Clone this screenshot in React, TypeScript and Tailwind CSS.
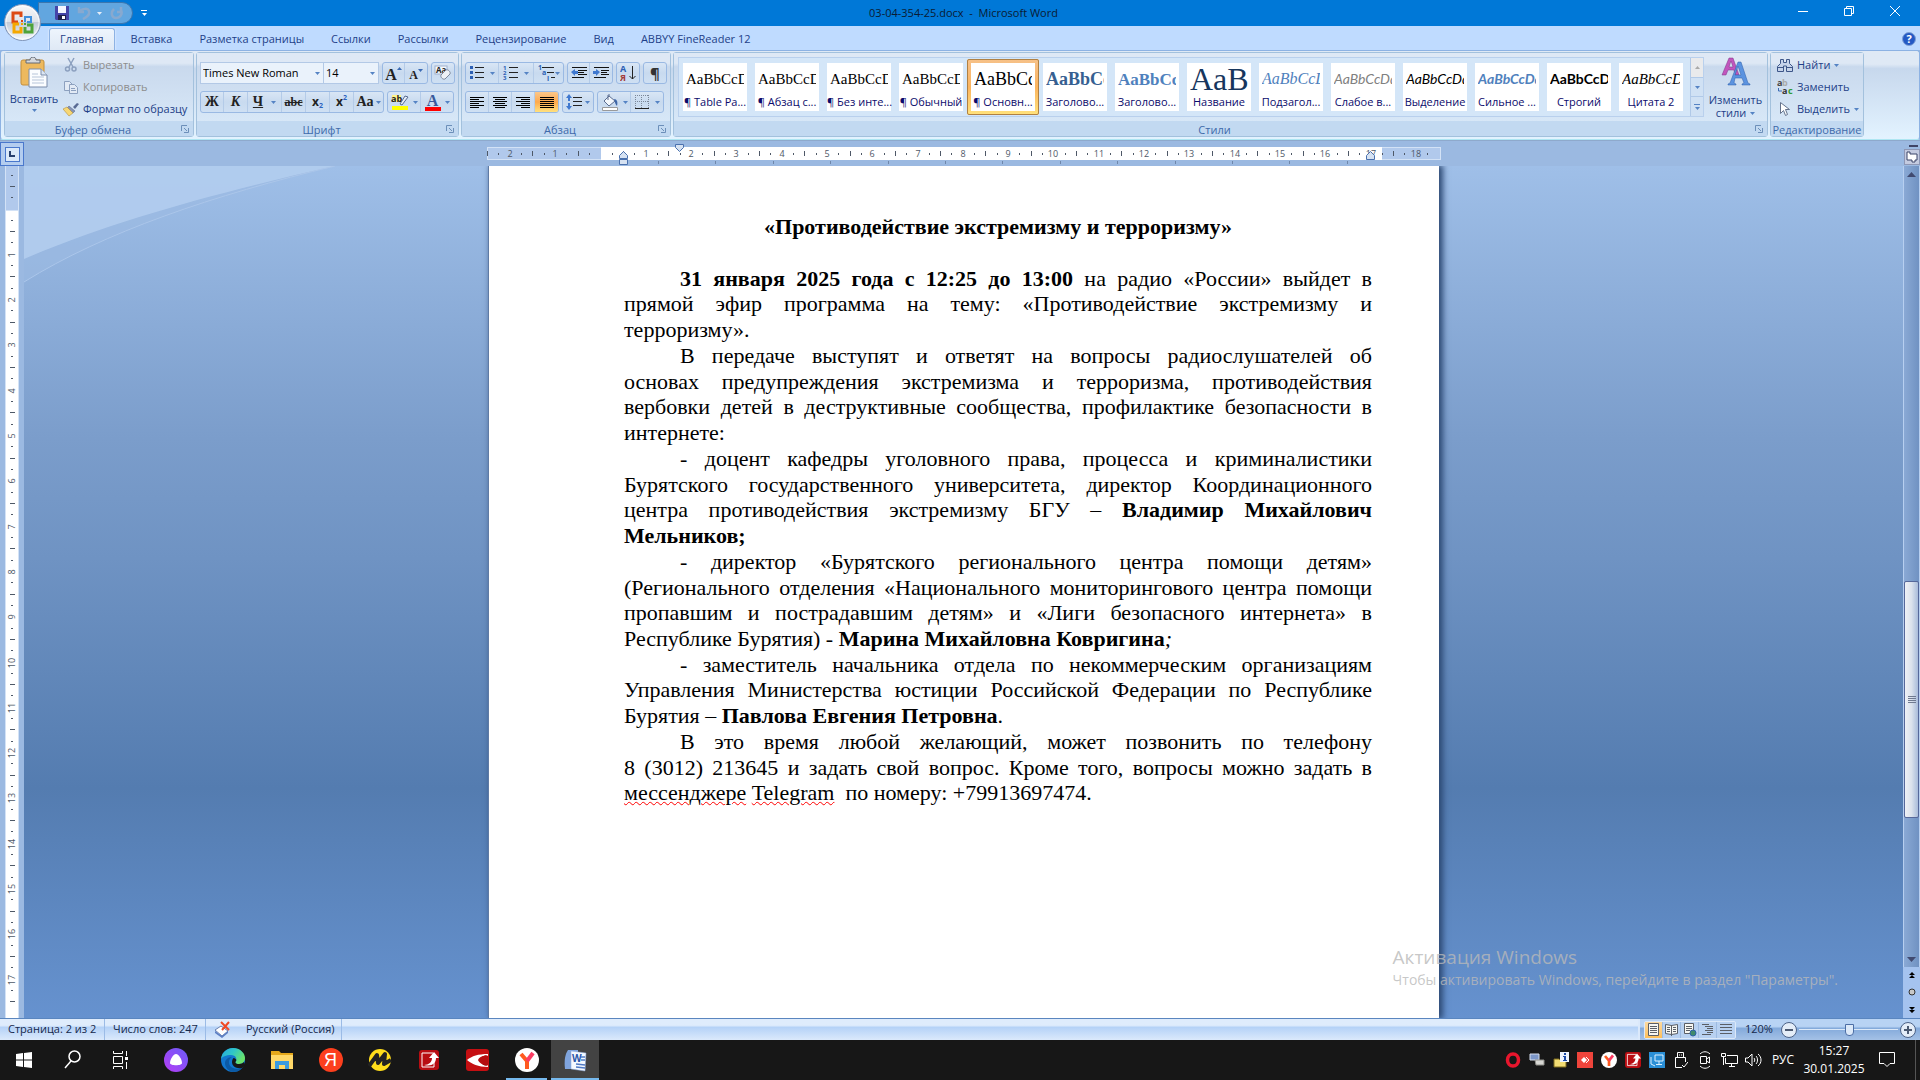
import React from 'react';

type IconProps = { className?: string };

const CELL = 'flex h-full items-center justify-center gap-1';
const GROUP =
  'flex h-[22px] divide-x divide-[#b4cbe8] overflow-hidden rounded-[3px] border border-[#9ab9e3] bg-gradient-to-b from-[#d9e6f5] via-[#c8daef] to-[#cfe0f3]';

const Arrow: React.FC<IconProps> = ({ className = 'text-[#5583c4]' }) => (
  <svg className={`shrink-0 ${className}`} width="5" height="3" viewBox="0 0 5 3" fill="currentColor" aria-hidden="true">
    <path d="M0 0h5L2.5 3z" />
  </svg>
);

/* ---------- Title bar ---------- */

const OfficeButton = () => (
  <button aria-label="Кнопка Office" className="absolute left-1 top-1 z-10">
    <svg width="38" height="38" viewBox="0 0 38 38">
      <defs>
        <linearGradient id="orb" x1="0" y1="0" x2="0" y2="1">
          <stop offset="0" stopColor="#f7f8fa" />
          <stop offset="0.48" stopColor="#dfe3ea" />
          <stop offset="0.5" stopColor="#c2cad7" />
          <stop offset="1" stopColor="#f5f9fd" />
        </linearGradient>
      </defs>
      <circle cx="18.5" cy="18.5" r="18" fill="url(#orb)" stroke="#7d93b8" />
      <circle cx="18.5" cy="18.5" r="16.5" fill="none" stroke="#fff" opacity="0.7" />
      <g fill="none" strokeWidth="3">
        <path d="M17 13V9H9v9h5" stroke="#dc4a14" />
        <path d="M17 23v5H10v-8h5" stroke="#f5a800" />
        <path d="M21 23v5h7v-7h-5" stroke="#4ea33a" />
      </g>
      <path d="M21 16v-3h6v5h-4" fill="none" stroke="#3f8fdc" strokeWidth="2" />
      <path d="M17 16h2v2h-2z" fill="#dc4a14" />
      <path d="M20 16h2v2h-2z" fill="#3f8fdc" />
      <path d="M17 19h2v2h-2z" fill="#f5a800" />
      <path d="M20 19h2v2h-2z" fill="#4ea33a" />
    </svg>
  </button>
);

const TitleBar = () => (
  <header className="relative flex h-[26px] shrink-0 items-center bg-[#0078d7]">
    <OfficeButton />
    <div className="ml-[38px] flex h-[22px] w-[95px] items-center rounded-r-full border border-[#3b76ae] bg-[#62a6df] pl-4">
      <button aria-label="Сохранить">
        <svg width="14" height="14" viewBox="0 0 14 14">
          <path d="M0 0h14v14H1L0 13z" fill="#4545a8" />
          <path d="M3 0h8v7H3z" fill="#f4f6ff" />
          <path d="M3 9h8v5H3z" fill="#20204a" />
          <path d="M7 10h3v3H7z" fill="#fff" />
        </svg>
      </button>
      <button aria-label="Отменить" className="ml-2 flex items-center gap-1.5">
        <svg width="14" height="14" viewBox="0 0 14 14" fill="none" stroke="#88a9cf" strokeWidth="2.5">
          <path d="M2 1v5h5M2 6c3-4 9-4 10-1 1 3-2 6-6 8" />
        </svg>
        <Arrow className="text-[#e6eef8]" />
      </button>
      <button aria-label="Вернуть" className="ml-2">
        <svg width="13" height="14" viewBox="0 0 13 14" fill="none" stroke="#88a9cf" strokeWidth="2.5">
          <path d="M11 1v5H7M11 4c2 4-1 8-5 8S0 7 4 3" />
        </svg>
      </button>
    </div>
    <button aria-label="Настройка панели быстрого доступа" className="ml-2 flex flex-col items-center gap-0.5 text-white">
      <span className="h-px w-1.5 bg-white" />
      <Arrow className="text-white" />
    </button>
    <h1 className="flex-1 text-center text-[11px] text-[#0a1b33]">03-04-354-25.docx&nbsp; - &nbsp;Microsoft Word</h1>
    <div className="mb-1 mr-0.5 flex text-white">
      {[
        { label: 'Свернуть', d: 'M0 5.5h10' },
        { label: 'Восстановить', d: 'M.5 2.5h7v7h-7zM2.5 2.5v-2h7v7h-2' },
        { label: 'Закрыть', d: 'M0 0l10 10M10 0L0 10' },
      ].map((b) => (
        <button key={b.label} aria-label={b.label} className="flex h-[22px] w-[46px] items-center justify-center">
          <svg width="10" height="10" viewBox="0 0 10 10" fill="none" stroke="currentColor">
            <path d={b.d} />
          </svg>
        </button>
      ))}
    </div>
  </header>
);

const TABS = ['Главная', 'Вставка', 'Разметка страницы', 'Ссылки', 'Рассылки', 'Рецензирование', 'Вид', 'ABBYY FineReader 12'];

const TabRow = () => (
  <nav className="flex h-6 shrink-0 items-end gap-[5px] bg-[#bfdbff] pl-[49px] pr-1">
    {TABS.map((tab, i) => (
      <button
        key={tab}
        className={
          i === 0
            ? 'h-[22px] rounded-t-[3px] border border-b-0 border-[#8db2e3] bg-gradient-to-b from-[#eef5fd] to-[#dfe9f5] px-2.5 shadow-[0_0_2px_#fff]'
            : 'h-[22px] border border-b-0 border-transparent px-2.5'
        }
      >
        {tab}
      </button>
    ))}
    <button aria-label="Справка" className="mb-1 ml-auto">
      <svg width="14" height="14" viewBox="0 0 14 14">
        <circle cx="7" cy="7" r="6.5" fill="#2459c4" stroke="#7f9fd4" />
        <text x="7" y="11" textAnchor="middle" fontSize="11" fontWeight="bold" fill="#fff">?</text>
      </svg>
    </button>
  </nav>
);

/* ---------- Ribbon ---------- */

const Panel: React.FC<{ title: string; launcher?: boolean; className?: string; children: React.ReactNode }> = ({
  title,
  launcher = true,
  className = '',
  children,
}) => (
  <section className={`flex h-[85px] shrink-0 flex-col rounded-[3px] border border-[#a3c1dd] ${className}`}>
    <div className="flex flex-1 bg-gradient-to-b from-[#dee8f5] from-15% via-[#c9d9ed] via-20% to-[#d7e7f7]">{children}</div>
    <div className="flex h-[15px] items-center bg-[#c2d9f1] text-[#3e6aaa]">
      <h2 className="flex-1 whitespace-nowrap pt-0.5 text-center leading-[14px]">{title}</h2>
      {launcher && (
        <button aria-label={`${title}: параметры`} className="mr-1">
          <svg width="8" height="8" viewBox="0 0 8 8" fill="none" stroke="#6c8fb9">
            <path d="M.5 6V.5H6M3 3l3 3M7.5 3v4.5H3" />
          </svg>
        </button>
      )}
    </div>
  </section>
);

const PasteIcon = () => (
  <svg width="28" height="32" viewBox="0 0 28 32">
    <rect x="1" y="3" width="23" height="25" rx="2" fill="#edb95e" stroke="#c58f3b" />
    <path d="M6 6V3h4c0-4 6-4 6 0h4v3z" fill="#d5d8dd" stroke="#646a75" />
    <path d="M9 12h12l6 6v12H9z" fill="#fbfdff" stroke="#7a8cab" />
    <path d="M21 12v6h6" fill="#dbe5f2" stroke="#7a8cab" />
    <path d="M12 17h6M12 20h12M12 23h12M12 26h12" stroke="#b7c5d9" />
  </svg>
);

const ClipboardPanel = () => (
  <Panel title="Буфер обмена" className="w-[190px]">
    <button className="flex w-[58px] flex-col items-center pt-1">
      <PasteIcon />
      <span className="mt-0.5 leading-4">Вставить</span>
      <Arrow className="mt-0.5 text-[#5583c4]" />
    </button>
    <div className="flex flex-col pt-px">
      <button disabled className="flex h-[22px] items-center gap-1 text-[#8d8d8d]">
        <svg width="16" height="16" viewBox="0 0 16 16" fill="none" stroke="#8ca0bf" strokeWidth="1.5">
          <path d="M5 1l5 9M11 1L6 10" />
          <circle cx="4.5" cy="12" r="2" />
          <circle cx="11" cy="12" r="2" />
        </svg>
        Вырезать
      </button>
      <button disabled className="flex h-[22px] items-center gap-1 text-[#8d8d8d]">
        <svg width="16" height="16" viewBox="0 0 16 16" fill="#e2eaf5" stroke="#8ca0bf">
          <path d="M1.5 2.5h5l3 3v6h-8z" />
          <path d="M6.5 5.5h5l3 3v6h-8zM8 9.5h4M8 11.5h5" />
        </svg>
        Копировать
      </button>
      <button className="flex h-[22px] items-center gap-1 whitespace-nowrap">
        <svg width="16" height="16" viewBox="0 0 16 16">
          <path d="M10 6l4-4 2 1-4 5z" fill="#596a93" />
          <path d="M6 5l6 5-2 2-6-5z" fill="#8794b4" stroke="#55658c" strokeWidth="0.5" />
          <path d="M4 6l6 6-4 3-6-7z" fill="#f7d774" stroke="#a8812d" strokeWidth="0.5" />
        </svg>
        Формат по образцу
      </button>
    </div>
  </Panel>
);

const Letter: React.FC<{ children: React.ReactNode; className?: string }> = ({ children, className = '' }) => (
  <span className={`font-['Liberation_Serif',serif] font-bold leading-none text-[#222] ${className}`}>{children}</span>
);

const FontPanel = () => (
  <Panel title="Шрифт" className="w-[263px]">
    <div className="flex flex-col gap-[7px] pl-[3px] pt-[9px]">
      <div className="flex gap-[3px]">
        <div className="flex h-[22px] text-[11px] text-black">
          <label className="relative flex w-[124px] items-center">
            <select aria-label="Шрифт" className="h-full w-full appearance-none border border-[#b3c9e6] bg-[#eaf2fb] px-0.5">
              <option>Times New Roman</option>
            </select>
            <Arrow className="pointer-events-none absolute right-1 text-[#5583c4]" />
          </label>
          <label className="relative flex w-[55px] items-center">
            <select aria-label="Размер шрифта" className="h-full w-full appearance-none border border-l-0 border-[#b3c9e6] bg-[#eaf2fb] px-0.5">
              <option>14</option>
            </select>
            <Arrow className="pointer-events-none absolute right-1 text-[#5583c4]" />
          </label>
        </div>
        <div className={GROUP}>
          <button aria-label="Увеличить размер" className="flex w-[22px] justify-center pt-1">
            <Letter className="text-base">A</Letter>
            <svg width="5" height="3" viewBox="0 0 5 3"><path d="M0 3h5L2.5 0z" fill="#3b6bb5" /></svg>
          </button>
          <button aria-label="Уменьшить размер" className="flex w-[22px] justify-center pt-1.5">
            <Letter className="text-xs">A</Letter>
            <Arrow className="text-[#3b6bb5]" />
          </button>
        </div>
        <div className={GROUP}>
          <button aria-label="Очистить формат" className={`${CELL} w-[22px]`}>
            <svg width="18" height="18" viewBox="0 0 18 18">
              <rect x="1" y="2" width="12" height="8" fill="#f4f8fd" stroke="#9fb0cc" />
              <text x="2" y="9" fontSize="8" fontWeight="bold" fill="#222">Aa</text>
              <path d="M7 11l5-5c2-1 5 2 4 4l-5 5c-2 1-5-2-4-4z" fill="#eef1f6" stroke="#7c879c" />
            </svg>
          </button>
        </div>
      </div>
      <div className="flex gap-[3px]">
        <div className={GROUP}>
          <button aria-label="Полужирный" className={`${CELL} w-[23px]`}><Letter className="text-sm">Ж</Letter></button>
          <button aria-label="Курсив" className={`${CELL} w-6`}><Letter className="text-sm italic">К</Letter></button>
          <button aria-label="Подчеркнутый" className={`${CELL} w-[34px] gap-2`}><Letter className="text-sm underline">Ч</Letter><Arrow /></button>
          <button aria-label="Зачеркнутый" className={`${CELL} w-6`}><Letter className="text-xs line-through">abc</Letter></button>
          <button aria-label="Подстрочный" className={`${CELL} w-6 !gap-0`}>
            <span className="text-xs font-bold text-[#222]">x</span><span className="mt-2 text-[7px] font-bold text-[#2c62c0]">2</span>
          </button>
          <button aria-label="Надстрочный" className={`${CELL} w-6 !gap-0`}>
            <span className="text-xs font-bold text-[#222]">x</span><span className="mb-2 text-[7px] font-bold text-[#2c62c0]">2</span>
          </button>
          <button aria-label="Регистр" className={`${CELL} w-[29px] !gap-0.5`}><Letter className="text-sm">Aa</Letter><Arrow /></button>
        </div>
        <div className={GROUP}>
          <button aria-label="Цвет выделения текста" className={`${CELL} w-[33px]`}>
            <svg width="18" height="18" viewBox="0 0 18 18">
              <path d="M1 2h9v7H1z" fill="#fff58a" />
              <text x="0" y="9" fontSize="9" fontWeight="bold" fill="#222">ab</text>
              <path d="M9 11l5-8 3 1-6 8z" fill="#e8eef8" stroke="#56698f" />
              <path d="M1 13h16v4H1z" fill="#ff0" />
            </svg>
            <Arrow />
          </button>
          <button aria-label="Цвет текста" className={`${CELL} w-8`}>
            <span className="flex flex-col items-center">
              <span className="font-['Liberation_Serif',serif] text-base font-bold leading-[13px] text-[#39599b]">A</span>
              <span className="h-1 w-4 bg-[#f00]" />
            </span>
            <Arrow />
          </button>
        </div>
      </div>
    </div>
  </Panel>
);

const ListIcon: React.FC<{ kind: 'bullet' | 'number' | 'tree' }> = ({ kind }) => (
  <svg width="17" height="16" viewBox="0 0 17 16">
    {kind === 'bullet' && (
      <>
        <path d="M6 2.5h9M6 7.5h9M6 12.5h9" stroke="#222" />
        <path d="M1 1h3v3H1zM1 6h3v3H1zM1 11h3v3H1z" fill="#2c5fb4" />
      </>
    )}
    {kind === 'number' && (
      <>
        <path d="M6 2.5h9M6 7.5h9M6 12.5h9" stroke="#222" />
        <g fontSize="6" fontWeight="bold" fill="#2c5fb4">
          <text x="0" y="5">1</text>
          <text x="0" y="10">2</text>
          <text x="0" y="15">3</text>
        </g>
      </>
    )}
    {kind === 'tree' && (
      <>
        <path d="M4 2.5h12M9 7.5h7M13 12.5h4" stroke="#222" />
        <g fontSize="7" fontWeight="bold" fill="#2c5fb4">
          <text x="0" y="5">1</text>
          <text x="4" y="10">a</text>
          <text x="9" y="16">i</text>
        </g>
      </>
    )}
  </svg>
);

const ALIGN = [
  { label: 'По левому краю', d: 'M0 .5h14M0 2.5h9M0 4.5h14M0 6.5h9M0 8.5h14M0 10.5h9' },
  { label: 'По центру', d: 'M0 .5h14M2 2.5h10M0 4.5h14M2 6.5h10M0 8.5h14M2 10.5h10' },
  { label: 'По правому краю', d: 'M0 .5h14M5 2.5h9M0 4.5h14M5 6.5h9M0 8.5h14M5 10.5h9' },
  { label: 'По ширине', d: 'M0 .5h14M0 2.5h14M0 4.5h14M0 6.5h14M0 8.5h14M0 10.5h14' },
];

const ParagraphPanel = () => (
  <Panel title="Абзац" className="w-[210px]">
    <div className="flex flex-col gap-[7px] pl-[3px] pt-[9px]">
      <div className="flex gap-[3px]">
        <div className={GROUP}>
          <button aria-label="Маркеры" className={`${CELL} w-[33px]`}><ListIcon kind="bullet" /><Arrow /></button>
          <button aria-label="Нумерация" className={`${CELL} w-[35px]`}><ListIcon kind="number" /><Arrow /></button>
          <button aria-label="Многоуровневый список" className={`${CELL} w-[29px] !gap-0`}><ListIcon kind="tree" /><Arrow /></button>
        </div>
        <div className={GROUP}>
          <button aria-label="Уменьшить отступ" className={`${CELL} w-[22px]`}>
            <svg width="16" height="14" viewBox="0 0 16 14">
              <path d="M1 1.5h15M7 4.5h9M7 6.5h6M7 8.5h9M1 11.5h12" stroke="#111" />
              <path d="M0 6l4-3v2h3v3H4v2z" fill="#3f78cf" />
            </svg>
          </button>
          <button aria-label="Увеличить отступ" className={`${CELL} w-[22px]`}>
            <svg width="16" height="14" viewBox="0 0 16 14">
              <path d="M1 1.5h15M8 4.5h8M8 6.5h6M8 8.5h8M1 11.5h12" stroke="#111" />
              <path d="M7 6L3 3v2H0v3h3v2z" fill="#3f78cf" />
            </svg>
          </button>
        </div>
        <div className={GROUP}>
          <button aria-label="Сортировка" className={`${CELL} w-[22px]`}>
            <svg width="16" height="18" viewBox="0 0 16 18">
              <text x="0" y="8" fontSize="9" fontWeight="bold" fill="#2c5fb4">А</text>
              <text x="0" y="17" fontSize="9" fontWeight="bold" fill="#a33a3a">Я</text>
              <path d="M12.5 2v13M9.5 12l3 3 3-3" fill="none" stroke="#222" />
            </svg>
          </button>
        </div>
        <div className={GROUP}>
          <button aria-label="Все знаки" className={`${CELL} w-[22px] text-[15px] font-bold text-[#333]`}>¶</button>
        </div>
      </div>
      <div className="flex gap-[3px]">
        <div className={GROUP}>
          {ALIGN.map((a, i) => (
            <button
              key={a.label}
              aria-label={a.label}
              className={`${CELL} w-[23px] ${i === 3 ? 'bg-gradient-to-b from-[#fbc78a] via-[#fda94c] to-[#ffe17e]' : ''}`}
            >
              <svg width="14" height="11" viewBox="0 0 14 11" stroke="#000"><path d={a.d} /></svg>
            </button>
          ))}
        </div>
        <div className={GROUP}>
          <button aria-label="Междустрочный интервал" className={`${CELL} w-[30px] !gap-0.5`}>
            <svg width="17" height="16" viewBox="0 0 17 16">
              <path d="M7 3.5h9M7 7.5h9M7 11.5h9" stroke="#222" />
              <path d="M3 0l3 4H4v3H2V4H0zM3 16l3-4H4V9H2v3H0z" fill="#3f78cf" />
            </svg>
            <Arrow />
          </button>
        </div>
        <div className={GROUP}>
          <button aria-label="Заливка" className={`${CELL} w-[33px]`}>
            <svg width="18" height="17" viewBox="0 0 18 17">
              <path d="M8 2l6 5-6 5-5-5z" fill="#f3f7fc" stroke="#5b6d90" />
              <path d="M7 6V1h2" fill="none" stroke="#5b6d90" />
              <path d="M13 5c3 0 4 3 3 7-2-2-2-4-3-7z" fill="#3f67a8" />
              <path d="M1.5 13.5h15v3h-15z" fill="#fff" stroke="#9a9a9a" />
            </svg>
            <Arrow />
          </button>
          <button aria-label="Границы" className={`${CELL} w-8 !gap-1.5`}>
            <svg width="14" height="14" viewBox="0 0 14 14" stroke="#7b8798" strokeDasharray="1 1">
              <path d="M0 .5h14M0 6.5h14M.5 0v13M6.5 0v13M13.5 0v13" />
              <path d="M0 13.5h14" stroke="#222" strokeDasharray="none" />
            </svg>
            <Arrow />
          </button>
        </div>
      </div>
    </div>
  </Panel>
);

const STYLES = [
  { name: '¶ Table Pa...', sample: 'AaBbCcDd', look: "font-['Liberation_Serif',serif] text-[15px] text-black" },
  { name: '¶ Абзац с...', sample: 'AaBbCcDd', look: "font-['Liberation_Serif',serif] text-[15px] text-black" },
  { name: '¶ Без инте...', sample: 'AaBbCcDd', look: "font-['Liberation_Serif',serif] text-[15px] text-black" },
  { name: '¶ Обычный', sample: 'AaBbCcDd', look: "font-['Liberation_Serif',serif] text-[15px] text-black" },
  { name: '¶ Основн...', sample: 'AaBbCcD', look: "font-['Liberation_Serif',serif] text-[18px] text-black" },
  { name: 'Заголово...', sample: 'AaBbCcD', look: "font-['Liberation_Serif',serif] text-[18px] font-bold text-[#365f91]" },
  { name: 'Заголово...', sample: 'AaBbCc', look: "font-['Liberation_Serif',serif] text-[17px] font-bold text-[#4f81bd]" },
  { name: 'Название', sample: 'AaBb', look: "font-['Liberation_Serif',serif] text-[32px] text-[#17365d]" },
  { name: 'Подзагол...', sample: 'AaBbCcD', look: "font-['Liberation_Serif',serif] text-[16px] italic text-[#4f81bd]" },
  { name: 'Слабое в...', sample: 'AaBbCcDd', look: 'font-[Lato,sans-serif] text-[14px] italic text-[#808080]' },
  { name: 'Выделение', sample: 'AaBbCcDd', look: 'font-[Lato,sans-serif] text-[14px] italic text-black' },
  { name: 'Сильное ...', sample: 'AaBbCcDd', look: 'font-[Lato,sans-serif] text-[14px] font-bold italic text-[#4f81bd]' },
  { name: 'Строгий', sample: 'AaBbCcDd', look: 'font-[Lato,sans-serif] text-[14px] font-bold text-black' },
  { name: 'Цитата 2', sample: 'AaBbCcDd', look: "font-['Liberation_Serif',serif] text-[15px] italic text-black" },
];

const StylesPanel = () => (
  <Panel title="Стили" className="w-[1095px]">
    <div className="ml-1 mt-1 flex h-[60px] border border-[#b9d0ed] bg-[#d4e6f8]">
      {STYLES.map((s, i) => (
        <button
          key={i}
          className={`mt-px flex h-14 w-[72px] items-center justify-center rounded-[2px] ${
            i === 4 ? 'bg-gradient-to-b from-[#f6c189] via-[#fbb45e] to-[#ffe27c] outline-1 -outline-offset-1 outline-[#b08043]' : ''
          }`}
        >
          <span className="flex h-12 w-16 flex-col bg-white text-[#0b0b6b]">
            <span className={`mx-[3px] flex h-8 items-center overflow-hidden whitespace-nowrap leading-none ${s.look}`}>{s.sample}</span>
            <span className="whitespace-nowrap text-center leading-[14px]">{s.name}</span>
          </span>
        </button>
      ))}
      <div className="ml-[3px] flex w-[13px] flex-col divide-y divide-[#b0c9e8] border-l border-[#b0c9e8] bg-[#d0e1f4]">
        <button aria-label="Вверх" className="flex flex-1 items-center justify-center bg-[#e9eaec]">
          <svg width="5" height="3" viewBox="0 0 5 3"><path d="M0 3h5L2.5 0z" fill="#a9a9a9" /></svg>
        </button>
        <button aria-label="Вниз" className="flex flex-1 items-center justify-center"><Arrow /></button>
        <button aria-label="Дополнительно" className="flex flex-1 flex-col items-center justify-center gap-0.5">
          <span className="h-px w-1.5 bg-[#5583c4]" />
          <Arrow />
        </button>
      </div>
    </div>
    <button className="flex flex-1 flex-col items-center pt-1">
      <svg width="30" height="30" viewBox="0 0 30 30">
        <path fillRule="evenodd" d="M1 18L8 1h4l6 17h-4l-1-5H7l-2 5zM8 10h4l-2-6z" fill="#c155bd" stroke="#7c3486" strokeWidth="0.5" />
        <path fillRule="evenodd" d="M7 28v-1l2-1L17 5h3l7 21 2 1v1h-8v-1l2-1-2-5h-7l-1 5 2 1v1zM14 18h6l-3-9z" fill="#5b93e0" stroke="#2f5fa9" strokeWidth="0.5" />
      </svg>
      <span className="mt-1.5 leading-[14px]">Изменить</span>
      <span className="flex items-center gap-1 leading-3">стили <Arrow /></span>
    </button>
  </Panel>
);

const EditPanel = () => (
  <Panel title="Редактирование" launcher={false} className="w-[94px]">
    <div className="flex flex-col pl-1.5 pt-px">
      <button className="flex h-[22px] items-center gap-1">
        <svg width="16" height="14" viewBox="0 0 16 14" fill="#c5d3ea" stroke="#3d5689">
          <path d="M3.5 1.5h3v3h3v-3h3v4l3 3v5h-6V8h-3v5.5h-6v-5l3-3z" />
          <path d="M1 9.5h5M10 9.5h5" />
        </svg>
        Найти <Arrow />
      </button>
      <button className="flex h-[22px] items-center gap-1">
        <svg width="16" height="16" viewBox="0 0 16 16" fontWeight="bold" fontSize="9">
          <text x="0" y="7" fill="#444">a</text>
          <text x="5" y="7" fill="#aaa">b</text>
          <text x="5" y="15" fill="#333">a</text>
          <text x="11" y="15" fill="#2f9a35">c</text>
          <path d="M1.5 9v3H5" fill="none" stroke="#3b6bb5" />
        </svg>
        Заменить
      </button>
      <button className="flex h-[22px] items-center gap-1">
        <svg width="16" height="16" viewBox="0 0 16 16">
          <path d="M3.5 1.5v11l3-3 2 5 2-1-2-5h4z" fill="#fff" stroke="#65738c" />
        </svg>
        Выделить <Arrow />
      </button>
    </div>
  </Panel>
);

/* ---------- Rulers ---------- */

const CM = 45.3;

const HorizontalRuler = () => (
  <div className="relative flex h-[26px] shrink-0 items-center border-t border-[#8ea9cc] bg-[#9bb9e1] pl-2">
    <button aria-label="Табуляция" className="absolute left-0 top-px flex size-6 items-center justify-center border border-[#4a78cc] bg-[#b4cdef]">
      <span className="flex size-[15px] items-center justify-center border border-[#4a78cc] bg-[#dbe9f9]">
        <svg width="6" height="6" viewBox="0 0 6 6"><path d="M1 0v5h5" fill="none" stroke="#27406e" strokeWidth="2" /></svg>
      </span>
    </button>
    <svg className="mx-auto" width="954" height="24" viewBox="487 142 954 24" fontSize="9" fill="#4e5867">
      <path d="M487 147h954v13H487z" fill="#d3e2f6" />
      <path d="M488 148h952v11H488z" fill="#b1c9ec" />
      <path d="M601 147h781v13H601z" fill="#fff" />
      {Array.from({ length: 84 }, (_, i) => i - 10).map((q) => {
        const x = Math.round(600.4 + (q * CM) / 4);
        if (x > 1438 || q === 0) return null;
        if (q % 4 === 0) return <text key={q} x={x} y="157" textAnchor="middle">{Math.abs(q / 4)}</text>;
        return q % 2 === 0
          ? <path key={q} d={`M${x} 151h1v5h-1z`} />
          : <path key={q} d={`M${x} 153h1v2h-1z`} />;
      })}
      {Array.from({ length: 13 }, (_, i) => (
        <path key={i} d={`M${658 + Math.round(i * 57.4)} 161h1v3h-1z`} fill="#6f87aa" />
      ))}
      <g fill="#d6e2f2" stroke="#4a71ae">
        <path d="M675.5 144.5h8v3l-4 4-4-4z" />
        <path d="M619.5 158.5v-3l4-4 4 4v3zM619.5 159.5h8v5h-8z" />
        <path d="M1366.5 159.5v-4l4-4 4 4v4z" />
      </g>
    </svg>
    <button aria-label="Линейка" className="absolute bottom-px right-0 flex size-4 items-center justify-center border border-[#8e97b5] bg-[#c4cbe0]">
      <svg width="12" height="12" viewBox="0 0 12 12"><path d="M1 1h3v2h7v6h-2v2H6V9H1z" fill="#fff" stroke="#3b4568" /></svg>
    </button>
    <span className="absolute right-0.5 top-1 h-0.5 w-[9px] bg-[#3f4466]" />
  </div>
);

const VerticalRuler = () => (
  <div className="w-6 shrink-0 overflow-hidden bg-[#9bb9e1]">
    <svg width="24" height="852" viewBox="0 166 24 852" fontSize="9" fill="#4e5867">
      <path d="M5 166h14v852H5z" fill="#d3e2f6" />
      <path d="M6 166h12v44H6z" fill="#b1c9ec" />
      <path d="M6 211h12v807H6z" fill="#fff" />
      {Array.from({ length: 74 }, (_, i) => i - 3).map((q) => {
        const y = Math.round(208.5 + (q * CM) / 4);
        if (q === 0) return null;
        if (q % 4 === 0)
          return <text key={q} x="15" y={y + 1} textAnchor="middle" transform={`rotate(-90 15 ${y + 1})`}>{q / 4}</text>;
        return q % 2 === 0
          ? <path key={q} d={`M10 ${y}h5v1h-5z`} />
          : <path key={q} d={`M11 ${y}h2v1h-2z`} />;
      })}
    </svg>
  </div>
);

/* ---------- Document ---------- */

const Document = () => (
  <article className="relative z-10 mx-auto w-[951px] shrink-0 border-l border-[#5f7ba5] bg-white pl-[135px] pr-[67px] pt-12 font-['Liberation_Serif','Times_New_Roman',serif] text-[22px] leading-[1.17] text-black shadow-[3px_0_6px_1px_#2d4a75]">
    <h2 className="mb-[26px] text-center font-bold">«Противодействие экстремизму и терроризму»</h2>
    <div className="text-justify indent-14">
      <p>
        <b>31 января 2025 года с 12:25 до 13:00</b> на радио «России» выйдет в прямой эфир программа на тему:
        «Противодействие экстремизму и терроризму».
      </p>
      <p>
        В передаче выступят и ответят на вопросы радиослушателей об основах&nbsp;предупреждения экстремизма и терроризма,
        противодействия вербовки&nbsp;детей в деструктивные сообщества, профилактике безопасности в интернете:
      </p>
      <p>
        - доцент кафедры уголовного права, процесса и криминалистики Бурятского государственного университета, директор
        Координационного центра противодействия экстремизму БГУ – <b>Владимир Михайлович Мельников;</b>
      </p>
      <p>
        - директор «Бурятского регионального центра помощи детям» (Регионального отделения «Национального
        мониторингового центра помощи пропавшим и пострадавшим детям» и «Лиги безопасного интернета» в Республике
        Бурятия) - <b>Марина Михайловна Ковригина</b><i>;</i>
      </p>
      <p>
        - заместитель начальника отдела по некоммерческим организациям Управления Министерства юстиции Российской
        Федерации по Республике Бурятия – <b>Павлова Евгения Петровна</b>.
      </p>
      <p>
        В это время любой желающий, может позвонить по телефону 8&nbsp;(3012)&nbsp;213645 и задать свой вопрос. Кроме
        того, вопросы можно задать в{' '}
        <span className="underline decoration-[#f00] decoration-wavy decoration-1">мессенджере</span>{' '}
        <span className="underline decoration-[#f00] decoration-wavy decoration-1">Telegram</span>&nbsp; по номеру:
        +79913697474.
      </p>
    </div>
  </article>
);

const ScrollBar = () => (
  <div className="flex w-[17px] shrink-0 flex-col bg-[#a5c3ef]">
    <div className="flex flex-1 flex-col items-center border-x border-[#b7cff0] bg-gradient-to-r from-[#8aa9d5] to-[#7092c2]">
      <button aria-label="Прокрутить вверх" className="flex h-4 items-center">
        <svg width="9" height="5" viewBox="0 0 9 5"><path d="M0 5h9L4.5 0z" fill="#414a70" /></svg>
      </button>
      <div className="flex-[400]" />
      <div className="flex h-[237px] w-[15px] flex-col items-center justify-center gap-px rounded-[2px] border border-[#56689a] bg-gradient-to-r from-[#eef1f6] via-[#dbe2ec] to-[#a9bcda]">
        {[0, 1, 2, 3].map((n) => (
          <span key={n} className="h-px w-2 bg-[#707a90]" />
        ))}
      </div>
      <div className="flex-[134]" />
      <button aria-label="Прокрутить вниз" className="flex h-4 items-center">
        <svg width="9" height="5" viewBox="0 0 9 5"><path d="M0 0h9L4.5 5z" fill="#414a70" /></svg>
      </button>
    </div>
    <div className="flex flex-col items-center">
      <button aria-label="Предыдущая страница" className="flex h-[17px] items-center">
        <svg width="6" height="7" viewBox="0 0 6 7"><path d="M3 0l3 3H0zM3 3l3 3H0z" /></svg>
      </button>
      <button aria-label="Выбор объекта перехода" className="flex h-4 items-center">
        <svg width="8" height="8" viewBox="0 0 8 8"><circle cx="4" cy="4" r="3" fill="#c8c8c8" stroke="#333" /></svg>
      </button>
      <button aria-label="Следующая страница" className="flex h-[18px] items-center">
        <svg width="6" height="7" viewBox="0 0 6 7"><path d="M3 4L0 1h6zM3 7L0 4h6z" /></svg>
      </button>
    </div>
  </div>
);

const Workspace = () => (
  <main className="flex min-h-0 flex-1">
    <VerticalRuler />
    <div className="relative flex min-w-0 flex-1 overflow-hidden bg-[linear-gradient(#9fbfe8,#7b9dcb_32%,#6f93c3_46%,#547cb0_73%,#6692cf)]">
      <svg className="absolute left-0 top-0" width="312" height="120" viewBox="0 0 312 120">
        <path d="M0 0h311C190 29 80 66 0 116z" fill="#9dbbe2" opacity="0.6" />
        <path d="M0 0h311C200 25 90 54 0 93z" fill="#b3cdee" opacity="0.9" />
        <path d="M311 0C190 29 80 66 0 116" fill="none" stroke="#abc6ea" />
      </svg>
      <Document />
      <div className="pointer-events-none absolute bottom-[29px] right-[65px] z-20 text-[#b9b9b9]/80">
        <p className="text-[19px] leading-7">Активация Windows</p>
        <p className="text-sm leading-[18px]">Чтобы активировать Windows, перейдите в раздел "Параметры".</p>
      </div>
    </div>
    <ScrollBar />
  </main>
);

/* ---------- Status bar ---------- */

const VIEWS = [
  { label: 'Разметка страницы', d: 'M1.5.5h10v12h-10zM3 3.5h7M3 5.5h7M3 7.5h7M3 9.5h7' },
  { label: 'Режим чтения', d: 'M.5 1.5l6 1 6-1v9l-6 1-6-1zM6.5 2v11M2 4.5h3M2 6.5h3M2 8.5h3M8 4.5h3M8 6.5h3M8 8.5h3' },
  { label: 'Веб-документ', d: 'M1.5.5h9v10h-9zM3 3.5h6M3 5.5h6M3 7.5h4' },
  { label: 'Структура', d: 'M1 1.5h7M4 3.5h8M6 5.5h6M4 7.5h8M6 9.5h6M1 11.5h9' },
  { label: 'Черновик', d: 'M1 1.5h12M1 4.5h12M1 7.5h12M1 10.5h12' },
];

const StatusBar = () => (
  <footer className="flex h-[22px] shrink-0 border-t border-[#5a86bf] bg-gradient-to-b from-[#dfecfc] from-30% via-[#b5d2f7] via-40% to-[#dbe9fb] text-[#15284b]">
    <button className="w-[105px] whitespace-nowrap border-r border-[#9bbbe6] pl-2 text-left">Страница: 2 из 2</button>
    <button className="w-[101px] whitespace-nowrap border-r border-[#9bbbe6] pl-2 text-left">Число слов: 247</button>
    <button aria-label="Правописание" className="flex w-10 items-center pl-2">
      <svg width="17" height="17" viewBox="0 0 17 17">
        <path d="M1 9l6-4 7 5-6 5z" fill="#fff" stroke="#6a7fae" />
        <path d="M1 10v2l7 5 6-5v-2l-6 5z" fill="#5d7fc4" />
        <path d="M7 1l8 8M15 1L8 9" stroke="#f04a26" strokeWidth="2" />
      </svg>
    </button>
    <button className="w-24 whitespace-nowrap border-r border-[#9bbbe6] text-left">Русский (Россия)</button>
    <div className="ml-auto flex w-[282px] items-center border-l-2 border-[#dbe9fb] bg-gradient-to-b from-[#b8d3f4] from-35% via-[#84aadb] via-45% to-[#a4c1e6] pl-1">
      <div className="flex h-[18px] divide-x divide-[#9dbbe2] rounded-[2px] border border-[#dce9f9] bg-[#b8d1f1]">
        {VIEWS.map((v, i) => (
          <button
            key={v.label}
            aria-label={v.label}
            className={`flex w-[18px] items-center justify-center ${i === 0 ? 'bg-gradient-to-b from-[#fbd9a0] to-[#fdbf58]' : ''}`}
          >
            <svg width="14" height="14" viewBox="0 0 14 14" fill="none" stroke="#5b5f66">
              <path d={v.d} fill={i < 3 ? '#f7f7f2' : 'none'} />
              {i === 2 && <circle cx="10" cy="10" r="3" fill="#3f8a6c" stroke="#2c62a8" />}
            </svg>
          </button>
        ))}
      </div>
      <button className="ml-[9px] w-9 text-left">120%</button>
      <button aria-label="Уменьшить" className="flex size-4 items-center justify-center rounded-full border border-[#4c6287] bg-[#e4edf8]">
        <span className="h-0.5 w-2 bg-[#4c5a72]" />
      </button>
      <input
        type="range"
        aria-label="Масштаб"
        defaultValue={51}
        className="mx-0.5 h-4 w-[99px] appearance-none bg-[linear-gradient(#dce9f9,#dce9f9)] bg-[length:100%_1px] bg-center bg-no-repeat [&::-webkit-slider-thumb]:h-3 [&::-webkit-slider-thumb]:w-[9px] [&::-webkit-slider-thumb]:appearance-none [&::-webkit-slider-thumb]:rounded-b-[4px] [&::-webkit-slider-thumb]:border [&::-webkit-slider-thumb]:border-[#4c6ea5] [&::-webkit-slider-thumb]:bg-[#dce9f9]"
      />
      <button aria-label="Увеличить" className="flex size-4 items-center justify-center rounded-full border border-[#4c6287] bg-[#e4edf8]">
        <svg width="8" height="8" viewBox="0 0 8 8" stroke="#4c5a72" strokeWidth="2"><path d="M0 4h8M4 0v8" /></svg>
      </button>
    </div>
  </footer>
);

/* ---------- Taskbar ---------- */

const YandexBrowser: React.FC<{ size: number }> = ({ size }) => (
  <svg width={size} height={size} viewBox="0 0 24 24">
    <circle cx="12" cy="12" r="12" fill="#fff" />
    <path d="M6 6l6 7v8" fill="none" stroke="#ff5a1f" strokeWidth="4" />
    <path d="M12 13l6-8" stroke="#fb3c63" strokeWidth="4" />
  </svg>
);

const RedArrow: React.FC<{ size: number }> = ({ size }) => (
  <svg width={size} height={size} viewBox="0 0 20 20">
    <rect width="20" height="20" rx="3" fill="#b80d12" />
    <path d="M15 12v5H3V3h11" fill="none" stroke="#fff" />
    <path d="M5 15c5 0 8-3 8-7h-3l5-6 5 6h-3c0 5-4 9-12 7z" fill="#fff" />
  </svg>
);

const TASKS: { label: string; width: string; icon: React.ReactNode }[] = [
  {
    label: 'Пуск',
    width: 'w-12',
    icon: (
      <svg width="16" height="16" viewBox="0 0 16 16" fill="#fff">
        <path d="M0 2l7-1v6.5H0zM8 1l8-1v7.5H8zM0 8.5h7V15l-7-1zM8 8.5h8V16l-8-1z" />
      </svg>
    ),
  },
  {
    label: 'Поиск',
    width: 'w-12',
    icon: (
      <svg width="17" height="20" viewBox="0 0 17 20" fill="none" stroke="#fff" strokeWidth="1.5">
        <circle cx="10.5" cy="6.5" r="5.5" />
        <path d="M7 11l-6 7" />
      </svg>
    ),
  },
  {
    label: 'Представление задач',
    width: 'w-12',
    icon: (
      <svg width="16" height="20" viewBox="0 0 16 20" fill="none" stroke="#fff">
        <path d="M1.5 1v2.5h9V1M1.5 6.5h9v7h-9zM1.5 19v-2.5h9V19M14.5 1v5M14.5 12v7" />
        <path d="M13 7h3v3h-3z" fill="#fff" stroke="none" />
      </svg>
    ),
  },
  {
    label: 'Алиса',
    width: 'w-16',
    icon: (
      <svg width="24" height="24" viewBox="0 0 24 24">
        <defs>
          <linearGradient id="alice" x1="0" y1="1" x2="1" y2="0">
            <stop offset="0" stopColor="#b63df5" />
            <stop offset="1" stopColor="#6a5cf8" />
          </linearGradient>
        </defs>
        <circle cx="12" cy="12" r="12" fill="url(#alice)" />
        <path d="M12 6c3 0 6 6 6 9s-12 3-12 0 3-9 6-9z" fill="#fff" />
      </svg>
    ),
  },
  {
    label: 'Microsoft Edge',
    width: 'w-[49px]',
    icon: (
      <svg width="24" height="24" viewBox="0 0 24 24">
        <defs>
          <linearGradient id="edge" x1="0" y1="0" x2="1" y2="0.5">
            <stop offset="0" stopColor="#25a7e0" />
            <stop offset="0.5" stopColor="#2fc6c9" />
            <stop offset="1" stopColor="#6be36a" />
          </linearGradient>
        </defs>
        <circle cx="12" cy="12" r="12" fill="#1277cf" />
        <path d="M0 11C1 4 6 0 12 0c7 0 12 5 12 10 0 4-3 6-6 6-4 0-4-2-3-3 1-2 0-6-5-6-5 0-9 2-10 4z" fill="url(#edge)" />
        <path d="M8 14c0 6 6 8 13 6-2 3-6 4-9 4-5-1-8-5-8-9 0-3 3-6 7-6-2 1-3 3-3 5z" fill="#0c5aa5" />
        <path d="M15 13c-1 1-1 3 3 3 2 0 4-1 5-2l1 3-3 3c-6 1-10-2-10-6 0-2 1-4 2-4 2 1 3 2 2 3z" fill="#171717" />
      </svg>
    ),
  },
  {
    label: 'Проводник',
    width: 'w-[49px]',
    icon: (
      <svg width="22" height="18" viewBox="0 0 22 18">
        <path d="M0 0h8l2 2h12v16H0z" fill="#e5a81b" />
        <path d="M0 4h22v14H0z" fill="#ffd868" />
        <path d="M4 10h14v8h-4v-4H8v4H4z" fill="#3a9be0" />
      </svg>
    ),
  },
  {
    label: 'Яндекс',
    width: 'w-[49px]',
    icon: (
      <span className="flex size-6 items-center justify-center rounded-full bg-[#fc3f1d] font-['Liberation_Sans',sans-serif] text-lg leading-6 text-white">Я</span>
    ),
  },
  {
    label: 'Mirapolis',
    width: 'w-[49px]',
    icon: (
      <svg width="24" height="24" viewBox="0 0 24 24">
        <circle cx="12" cy="12" r="11" fill="#ffdd1b" />
        <path d="M1 18L9 7l1 8 7-9-1 10 7-4" fill="none" stroke="#222" strokeWidth="4" strokeLinejoin="round" />
      </svg>
    ),
  },
  { label: 'Red', width: 'w-[49px]', icon: <RedArrow size={20} /> },
  {
    label: 'FineReader',
    width: 'w-[49px]',
    icon: (
      <svg width="23" height="22" viewBox="0 0 23 22">
        <rect width="23" height="22" rx="3" fill="#c50f12" />
        <path d="M1 11C6 7 12 5 22 5v2a5 5 0 1 0 0 9v2C12 18 6 15 1 11z" fill="#fff" />
        <path d="M22 7a5 5 0 1 0 0 9z" fill="#8f0a0c" />
        <path d="M12 11c1-3 5-5 10-4v9c-5 0-9-2-10-5z" fill="#b60d10" />
      </svg>
    ),
  },
  { label: 'Яндекс.Браузер', width: 'w-[49px]', icon: <YandexBrowser size={24} /> },
  {
    label: 'Word',
    width: 'w-12',
    icon: (
      <svg width="23" height="23" viewBox="0 0 23 23">
        <path d="M4 1h10v19H1C0 12 1 5 4 1z" fill="#7fa4dd" />
        <path d="M7 2l15 2-1 18-14-2z" fill="#f5f9ff" stroke="#8aa6d8" strokeWidth="0.5" />
        <text x="8" y="13" fontSize="10" fontWeight="bold" fill="#2a56a7">W</text>
        <path d="M17 8h4M17 11h4M12 15l9 1M12 18l9 1" stroke="#4f79c4" strokeWidth="1.5" />
      </svg>
    ),
  },
];

const TRAY: { label: string; icon: React.ReactNode }[] = [
  {
    label: 'Opera',
    icon: <svg width="16" height="16" viewBox="0 0 16 16"><ellipse cx="8" cy="8" rx="5.5" ry="6" fill="none" stroke="#e8162d" strokeWidth="3.5" /></svg>,
  },
  {
    label: 'Сеть и принтер',
    icon: (
      <svg width="16" height="16" viewBox="0 0 16 16">
        <path d="M1 2h9v6H1z" fill="#7c97c9" stroke="#d7dfee" />
        <path d="M6 8h9v5H7z" fill="#d8d8d4" stroke="#8f8f8a" />
      </svg>
    ),
  },
  {
    label: 'Сведения',
    icon: (
      <svg width="16" height="16" viewBox="0 0 16 16">
        <path d="M1 7h5l1 1h6v7H1z" fill="#f3dd74" stroke="#7c6a1c" />
        <path d="M7 0h9v10H7z" fill="#eef4fd" />
        <path d="M11 1h2v2h-2zM10 4h3v4h1v1h-4V8h1V5h-1z" fill="#1c4ba8" />
      </svg>
    ),
  },
  {
    label: 'AnyDesk',
    icon: (
      <svg width="16" height="16" viewBox="0 0 16 16">
        <path d="M0 0h16v16H0z" fill="#ef443b" />
        <path d="M4 8l3-3 3 3-3 3z" fill="#fff" />
        <path d="M9 5l3 3-3 3" fill="none" stroke="#fff" />
      </svg>
    ),
  },
  { label: 'Яндекс.Браузер', icon: <YandexBrowser size={16} /> },
  { label: 'Red', icon: <RedArrow size={16} /> },
  {
    label: 'Обновление',
    icon: (
      <svg width="16" height="16" viewBox="0 0 16 16">
        <path d="M0 0h16v16H0z" fill="#2a8fd6" />
        <path d="M6 3h8v6H6zM10 9v3M7 12.5h6M2 5v7l4 2" fill="none" stroke="#d9efff" />
      </svg>
    ),
  },
  {
    label: 'USB',
    icon: (
      <svg width="14" height="18" viewBox="0 0 14 18" fill="none" stroke="#fff">
        <path d="M3.5 6V1.5h6V6M8 16.5H1.5V6.5h10V11M5 4h1M7 4h1M8 14l2 2 4-5" />
      </svg>
    ),
  },
  {
    label: 'Камера',
    icon: (
      <svg width="14" height="18" viewBox="0 0 14 18" fill="none" stroke="#fff">
        <path d="M2.5 5.5h6v7h-6zM8.5 8l3-2v6l-3-2M2 3c3-3 7-3 10 0M2 15c3 3 7 3 10 0" />
      </svg>
    ),
  },
  {
    label: 'Сеть',
    icon: (
      <svg width="17" height="16" viewBox="0 0 17 16" fill="none" stroke="#fff">
        <path d="M6 3.5h10.5v8H4.5V6M8 14.5h6M10.5 12v3M.5 1.5h4v3h-4zM2.5 5v8" />
      </svg>
    ),
  },
  {
    label: 'Громкость',
    icon: (
      <svg width="17" height="16" viewBox="0 0 17 16" fill="none" stroke="#fff">
        <path d="M.5 6v4H3l4 4V2L3 6zM9 6c1 1 1 3 0 4M11 4c2 2 2 6 0 8M13 2c4 3 4 9 0 12" />
      </svg>
    ),
  },
];

const Taskbar = () => (
  <nav aria-label="Панель задач" className="flex h-10 shrink-0 justify-between bg-[#171717] text-white">
    <div className="flex">
      {TASKS.map((t) => (
        <button
          key={t.label}
          aria-label={t.label}
          className={`relative flex items-center justify-center ${t.width} ${t.label === 'Word' ? 'bg-[#434343]' : ''}`}
        >
          {t.icon}
          {t.label === 'Word' && <span className="absolute inset-x-0 bottom-0 h-0.5 bg-[#76b9ed]" />}
          {t.label === 'Яндекс.Браузер' && <span className="absolute inset-x-1 bottom-0 h-0.5 bg-[#76b9ed]" />}
        </button>
      ))}
    </div>
    <div className="flex items-center text-xs">
      {TRAY.map((t) => (
        <button key={t.label} aria-label={t.label} className="flex w-6 justify-center">{t.icon}</button>
      ))}
      <button className="w-9">РУС</button>
      <div className="w-[66px] whitespace-nowrap text-center leading-[18px]">
        <p>15:27</p>
        <p>30.01.2025</p>
      </div>
      <button aria-label="Уведомления" className="ml-3 mr-5 flex w-4 justify-center">
        <svg width="16" height="16" viewBox="0 0 16 16" fill="none" stroke="#fff">
          <path d="M.5.5h15v11H11l-3 3-3-3H.5z" />
        </svg>
      </button>
      <span className="mr-1 h-full w-px bg-[#555]" />
    </div>
  </nav>
);

export default function App() {
  return (
    <div className="flex h-screen flex-col overflow-hidden bg-[#9bb9e1] font-['Open_Sans','Noto_Sans',sans-serif] text-[11px] text-[#1e3f88]">
      <TitleBar />
      <TabRow />
      <div className="flex h-[90px] shrink-0 gap-0.5 overflow-hidden rounded-[3px] border border-[#8db2e3] border-b-[#aee6f2] bg-gradient-to-b from-[#dfe9f5] from-15% via-[#c7d8ed] via-20% to-[#e3f3ff] px-[3px] pt-px">
        <ClipboardPanel />
        <FontPanel />
        <ParagraphPanel />
        <StylesPanel />
        <EditPanel />
      </div>
      <HorizontalRuler />
      <Workspace />
      <StatusBar />
      <Taskbar />
    </div>
  );
}
